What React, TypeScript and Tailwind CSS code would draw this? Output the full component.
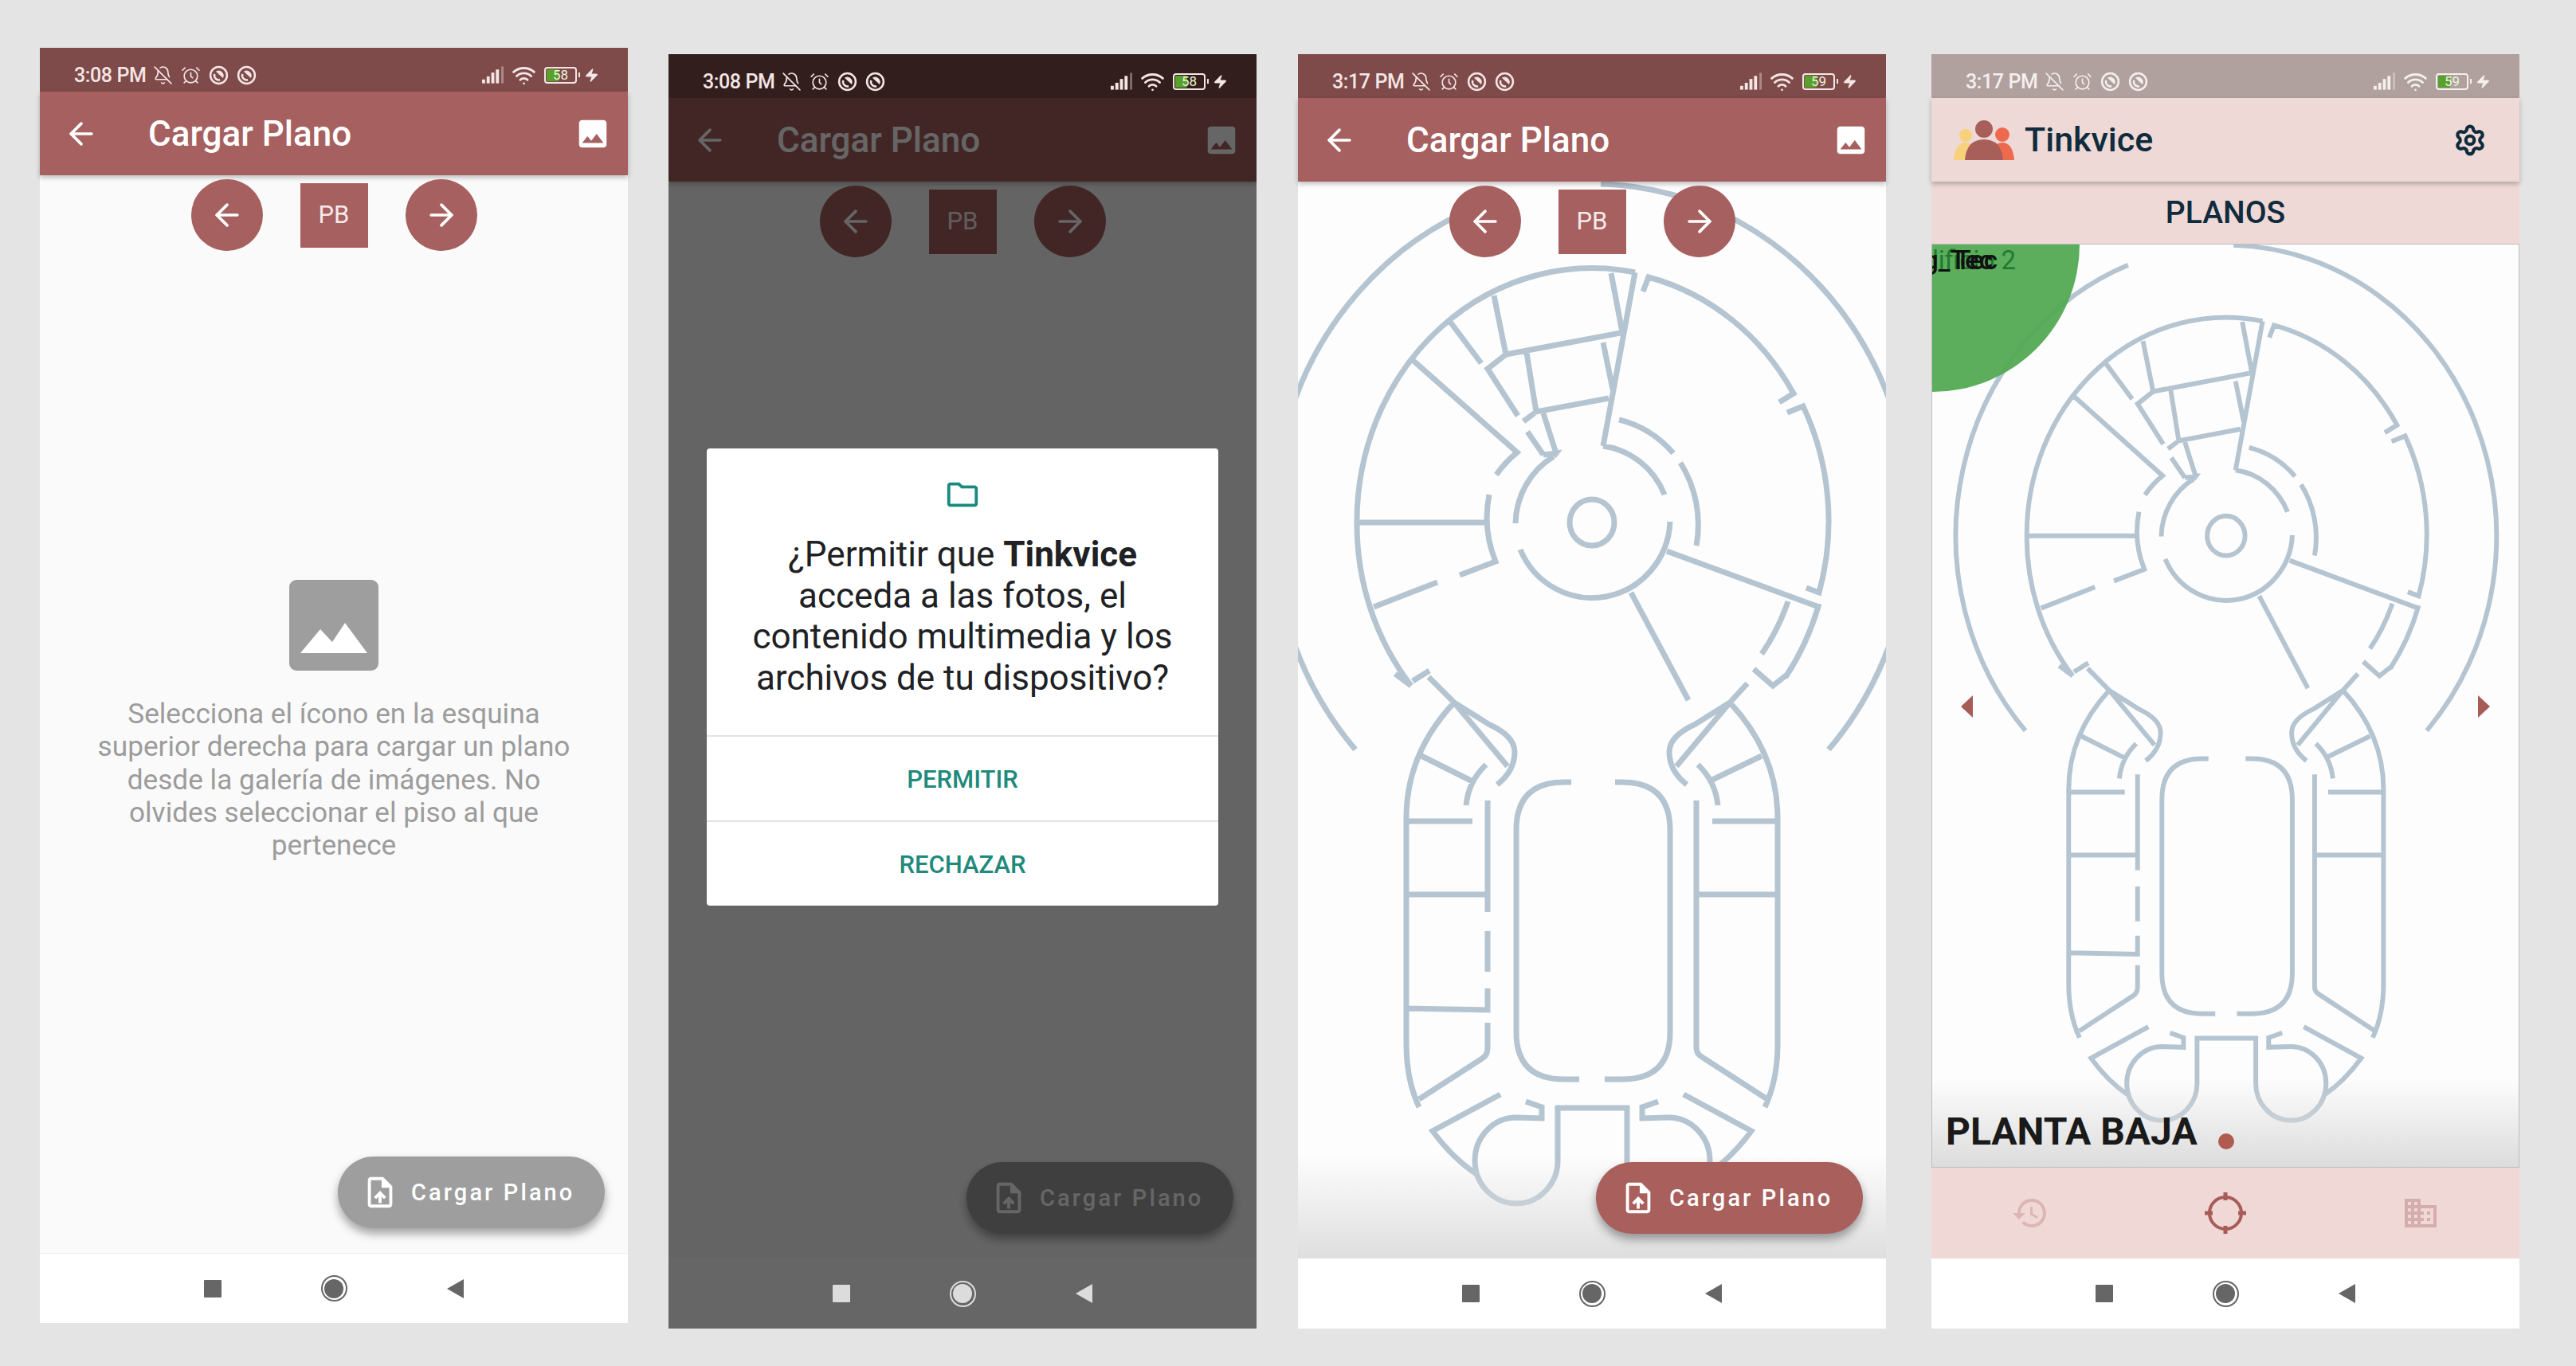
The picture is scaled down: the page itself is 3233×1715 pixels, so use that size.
import { AlarmClock, ArrowLeft, ArrowRight, BellOff, Settings, Wifi, Zap } from "lucide-react";
import { MdDomain, MdHistory, MdImage, MdOutlineFolder, MdUploadFile } from "react-icons/md";

const font = "font-['Roboto',sans-serif]";

// floor plan, coordinates are px from the centre ring of the third screen
const planPath = [
  // outer ring
  "M-145 -396A400 425 0 0 0 -297 285",
  "M11 -425A400 425 0 0 1 297 285",
  // main ring
  "M54 -314A295 318 0 0 0 -295 0A295 318 0 0 0 -227 205",
  "M64 -290L71 -308A295 318 0 0 1 253 -162L235 -151",
  "M245 -138L265 -146A295 318 0 0 1 285 88L269 82",
  "M285 102A295 318 0 0 1 243 194",
  // hooks at the bottom of the ring
  "M-204 186L-225 199M-227 205L-247 190",
  "M203 184L227 205L246 190",
  // second ring
  "M34 -129A133 140 0 0 1 102 -87",
  "M111 -75A133 140 0 0 1 131 29",
  "M-129 -35A133 140 0 0 0 -121 49L-166 66",
  "M-120 -60A133 140 0 0 1 -94 -88L-224 -203",
  "M-274 106L-194 75",
  "M-293 0L-135 0",
  // inner ring and centre
  "M14 -96A97 100 0 0 1 91 -35",
  "M98 -1A98 100 0 0 1 -90 34",
  "M-96 1A97 100 0 0 1 -48 -83",
  "M28 0A28 29 0 1 1 -28 0A28 29 0 1 1 28 0",
  "M54 -314L14 -96",
  "M-48 -83L-45 -87L-61 -85",
  // radial lines
  "M94 36L282 105",
  "M49 88L121 223",
  "M246 99A240 260 0 0 1 213 165",
  // rooms at the top
  "M24 -313L38 -239",
  "M-108 -211L36 -238",
  "M-123 -285L-108 -211L-131 -193L-93 -134",
  "M-178 -252L-139 -200",
  "M-82 -213L-70 -139L21 -156",
  "M14 -226L26 -167",
  "M-70 -139L-86 -127",
  "M-61 -137L-45 -87",
  "M-81 -114L-61 -85",
  // left wing
  "M-205 194L-173 226L-130 253Q-97 268 -97 288Q-97 312 -119 329",
  "M-173 226L-106 306",
  "M-173 226Q-233 290 -233 371L-233 655Q-233 700 -217 734",
  "M-214 293L-150 325",
  "M-133 304Q-155 325 -158 355",
  "M-233 375L-150 375",
  "M-233 467L-133 467",
  "M-131 349L-131 489",
  "M-131 513L-131 564",
  "M-131 585L-131 612L-233 610",
  "M-131 628L-131 660Q-131 669 -138 673L-217 724",
  // right wing
  "M195 202L173 226L130 253Q97 268 97 288Q97 312 119 329",
  "M173 226L106 306",
  "M173 226Q233 290 233 371L233 655Q233 700 217 734",
  "M213 293L151 323",
  "M133 304Q155 325 158 355",
  "M151 375L233 375",
  "M134 467L233 467",
  "M131 349L131 660Q131 667 138 671L220 724",
  // middle room
  "M-26 326L-35 326Q-95 326 -95 386L-95 640Q-95 699 -35 699L-16 699",
  "M29 326L38 326Q98 326 98 386L98 640Q98 699 38 699L16 699",
  // bottom
  "M-115 718L-200 764Q-175 798 -145 818",
  "M115 718L200 764Q175 798 145 818",
  "M-83 727L-63 734L-63 748L-95 747A52 54 0 1 0 -43 799L-43 735L44 735L44 799A52 54 0 1 0 95 747L63 748L63 734L83 727",
].join("");

function FloorPlan({ viewBox }: { viewBox: string }) {
  return (
    <svg viewBox={viewBox} preserveAspectRatio="none" className="absolute inset-0 h-full w-full" fill="none">
      <path d={planPath} stroke="#b4c4d0" strokeWidth={7} />
    </svg>
  );
}

function RingMark() {
  return (
    <svg viewBox="0 0 24 24" className="h-[25px] w-[25px]" fill="none" stroke="currentColor" strokeWidth={2.4}>
      <circle cx="12" cy="12" r="10" />
      <path d="M9.5 7.5A5.5 5.5 0 0 1 17 14.5Z" fill="currentColor" strokeWidth={1} />
      <path d="M7 10.5a5.5 5.5 0 0 0 6.5 7" />
    </svg>
  );
}

function SignalBars() {
  return (
    <svg viewBox="0 0 28 24" className="h-[24px] w-[27px]" fill="currentColor">
      <rect x="0" y="18" width="4" height="5" />
      <rect x="6" y="14" width="4" height="9" />
      <rect x="12" y="9" width="4" height="14" />
      <rect x="18" y="5" width="4" height="18" />
      <rect x="25" y="1" width="3" height="22" opacity=".4" />
    </svg>
  );
}

function Battery({ level }: { level: string }) {
  return (
    <div className="flex items-center">
      <div className="relative flex h-[21px] w-[41px] items-center overflow-hidden rounded-[4px] border-2 border-current p-[1px]">
        <div className="h-full w-[42%] rounded-[1px] bg-[#5aa02c]" />
        <span className="absolute inset-0 text-center text-[17px] leading-[17px] text-[#e9f7d8]">{level}</span>
      </div>
      <div className="ml-[2px] h-[6px] w-[2px] bg-current" />
    </div>
  );
}

function StatusBar({ time, battery, className }: { time: string; battery: string; className: string }) {
  return (
    <div className={`flex h-[55px] shrink-0 items-center pl-[43px] pr-[36px] pt-[13px] ${className}`}>
      <span className="mr-[9px] text-[25px] font-medium leading-none tracking-[-0.4px]">{time}</span>
      <div className="flex items-center gap-[10px]">
        <BellOff size={25} strokeWidth={1.6} />
        <AlarmClock size={25} strokeWidth={1.6} />
        <RingMark />
        <RingMark />
      </div>
      <div className="ml-auto flex items-center">
        <SignalBars />
        <Wifi size={31} strokeWidth={2.2} className="ml-[10px]" />
        <div className="ml-[10px]">
          <Battery level={battery} />
        </div>
        <Zap size={19} fill="currentColor" strokeWidth={1} className="ml-[5px]" />
      </div>
    </div>
  );
}

function AppBar() {
  return (
    <div className="relative z-10 flex h-[105px] shrink-0 items-center bg-[#a66060] pl-[30px] pr-[21px] text-white shadow-[0_3px_6px_rgba(0,0,0,0.25)]">
      <ArrowLeft size={44} strokeWidth={2} />
      <span className="ml-[62px] text-[44px] font-medium leading-none">Cargar Plano</span>
      <MdImage size={46} className="ml-auto" />
    </div>
  );
}

function FloorPicker() {
  return (
    <div className="relative z-10 flex items-center justify-center gap-[47px] pt-[5px]">
      <div className="flex h-[90px] w-[90px] items-center justify-center rounded-full bg-[#a66060] text-white">
        <ArrowLeft size={44} strokeWidth={2} />
      </div>
      <div className="flex h-[81px] w-[85px] items-center justify-center bg-[#a66060] text-[31px] text-[#f5e9e9]">PB</div>
      <div className="flex h-[90px] w-[90px] items-center justify-center rounded-full bg-[#a66060] text-white">
        <ArrowRight size={44} strokeWidth={2} />
      </div>
    </div>
  );
}

function Fab({ className }: { className: string }) {
  return (
    <div
      className={`absolute bottom-[31px] right-[29px] z-10 flex h-[90px] w-[335px] items-center rounded-full pl-[30px] text-white shadow-[0_7px_12px_rgba(0,0,0,0.35)] ${className}`}
    >
      <MdUploadFile size={46} />
      <span className="ml-[16px] text-[29px] font-medium leading-none tracking-[3.1px]">Cargar Plano</span>
    </div>
  );
}

function NavBar({ className, iconClass, icon }: { className: string; iconClass: string; icon: string }) {
  return (
    <div className={`flex h-[88px] shrink-0 items-center justify-center gap-[125px] ${className}`}>
      <div className={`h-[22px] w-[22px] rounded-[1px] ${iconClass}`} />
      <div className="flex h-[33px] w-[33px] items-center justify-center rounded-full border-2" style={{ borderColor: icon }}>
        <div className={`h-[24px] w-[24px] rounded-full ${iconClass}`} />
      </div>
      <svg viewBox="0 0 22 24" className="h-[24px] w-[22px]" fill={icon}>
        <path d="M21 0V24L0 12Z" />
      </svg>
    </div>
  );
}

function EmptyBody() {
  return (
    <div className="relative flex min-h-0 flex-1 flex-col bg-[#fafafa]">
      <FloorPicker />
      <div className="mt-[413px] flex flex-col items-center">
        <div className="flex h-[114px] w-[112px] items-center justify-center rounded-[9px] bg-[#9e9e9e]">
          <svg viewBox="0 0 112 114" className="h-full w-full" fill="#ffffff">
            <path d="M14 92L39 62L54 78L70 54L98 92Z" />
          </svg>
        </div>
        <p className="mt-[34px] text-center text-[35.2px] leading-[41.3px] text-[#9c9c9c]">
          Selecciona el ícono en la esquina
          <br />
          superior derecha para cargar un plano
          <br />
          desde la galería de imágenes. No
          <br />
          olvides seleccionar el piso al que
          <br />
          pertenece
        </p>
      </div>
      <Fab className="bg-[#9e9e9e]" />
    </div>
  );
}

function PermissionDialog() {
  return (
    <div className="absolute inset-0 z-20 flex items-center justify-center bg-black/60 pb-[36px]">
      <div className="flex h-[574px] w-[642px] flex-col rounded-[4px] bg-white">
        <div className="flex h-[360px] shrink-0 flex-col items-center pt-[35px]">
          <MdOutlineFolder size={46} className="text-[#1a8a7e]" />
          <p className="mt-[27px] text-center text-[44px] leading-[51.5px] text-[#202124]">
            ¿Permitir que <b className="font-bold">Tinkvice</b>
            <br />
            acceda a las fotos, el
            <br />
            contenido multimedia y los
            <br />
            archivos de tu dispositivo?
          </p>
        </div>
        <div className="flex h-[107px] items-center justify-center border-t-2 border-[#e3e3e3] pt-[4px] text-[31px] font-medium text-[#1f8a7c]">PERMITIR</div>
        <div className="flex flex-1 items-center justify-center border-t-2 border-[#e3e3e3] pt-[4px] text-[31px] font-medium text-[#1f8a7c]">RECHAZAR</div>
      </div>
    </div>
  );
}

function LogoPeople() {
  return (
    <svg viewBox="0 0 76 50" className="h-[50px] w-[76px]">
      <circle cx="15" cy="19" r="8" fill="#f8d27a" />
      <path d="M0 50Q2 28 15 28Q22 28 24 34L14 50Z" fill="#f8d27a" />
      <circle cx="61" cy="18" r="9" fill="#ee6a4f" />
      <path d="M76 50Q74 28 61 28Q54 28 50 34L62 50Z" fill="#ee6a4f" />
      <circle cx="38" cy="11" r="11" fill="#a85f5a" />
      <path d="M14 50Q16 24 38 24Q60 24 62 50Z" fill="#a85f5a" />
    </svg>
  );
}

function TabBar() {
  return (
    <div className="relative flex h-[114px] shrink-0 items-center justify-between bg-[#efd8d6] pl-[100px] pr-[100px]">
      <MdHistory size={48} className="text-[#dcb6b4]" />
      <svg viewBox="0 0 52 52" className="h-[52px] w-[52px]" fill="none" stroke="#a85c58" strokeWidth={4}>
        <circle cx="26" cy="26" r="20" />
        <path d="M26 0V10M26 42V52M0 26H10M42 26H52" strokeWidth={5} />
      </svg>
      <MdDomain size={48} className="text-[#d3aeac]" />
    </div>
  );
}

const lightNav = { className: "bg-white", iconClass: "bg-[#666666]", icon: "#666666" };

export default function App() {
  return (
    <div className={`flex h-[1715px] w-[3233px] items-start overflow-hidden bg-[#e4e4e4] pl-[50px] ${font}`}>
      {/* 1: empty state */}
      <div className="mt-[60px] flex h-[1601px] w-[738px] shrink-0 flex-col">
        <StatusBar time="3:08 PM" battery="58" className="bg-[#7f4b4a] text-[#f3e6e5]" />
        <AppBar />
        <EmptyBody />
        <NavBar className="border-t border-[#eeeeee] bg-white" iconClass="bg-[#666666]" icon="#666666" />
      </div>

      {/* 2: permission prompt, the system bars sit above the scrim */}
      <div className="relative ml-[51px] mt-[68px] flex h-[1600px] w-[738px] shrink-0 flex-col overflow-hidden">
        <StatusBar time="3:08 PM" battery="58" className="relative z-30 bg-[#331e1e] text-[#f3e6e5]" />
        <AppBar />
        <EmptyBody />
        <NavBar className="relative z-30 bg-[#666666]" iconClass="bg-[#dcdcdc]" icon="#dcdcdc" />
        <PermissionDialog />
      </div>

      {/* 3: plan loaded */}
      <div className="ml-[52px] mt-[68px] flex h-[1600px] w-[738px] shrink-0 flex-col">
        <StatusBar time="3:17 PM" battery="59" className="bg-[#7f4b4a] text-[#f3e6e5]" />
        <AppBar />
        <div className="relative min-h-0 flex-1 overflow-hidden bg-[#fdfdfd]">
          <FloorPlan viewBox="-369 -428 738 1352" />
          <FloorPicker />
          <div className="absolute inset-x-0 bottom-0 h-[130px] bg-gradient-to-t from-[#dedede] to-[#dedede]/0" />
          <Fab className="bg-[#a95f5b]" />
        </div>
        <NavBar {...lightNav} />
      </div>

      {/* 4: plan viewer */}
      <div className="ml-[57px] mt-[68px] flex h-[1600px] w-[738px] shrink-0 flex-col">
        <StatusBar time="3:17 PM" battery="59" className="bg-[#b0a09e] text-[#f5efee]" />
        <div className="relative z-10 flex h-[105px] shrink-0 items-center bg-[#eed9d6] pl-[28px] pr-[41px] shadow-[0_3px_6px_rgba(0,0,0,0.25)]">
          <LogoPeople />
          <span className="ml-[13px] text-[43px] font-medium leading-none text-[#0f2b3d]">Tinkvice</span>
          <Settings size={42} strokeWidth={2.4} className="ml-auto text-[#0f2b3d]" />
        </div>
        <div className="flex h-[78px] shrink-0 items-center justify-center bg-[#eed9d6] text-[39px] font-medium leading-none text-[#0f2b3d]">PLANOS</div>
        <div className="relative min-h-0 flex-1 overflow-hidden border border-[#bdbdbd] bg-[#fdfdfd]">
          <FloorPlan viewBox="-435 -426 868 1349" />
          <div className="absolute -left-[185px] -top-[185px] h-[370px] w-[370px] rounded-full bg-[#53aa54]/95" />
          <span className="absolute right-[631px] top-[1px] whitespace-nowrap text-[33px] leading-[37px] text-[#1f7a30]">Edificio 2</span>
          <span className="absolute right-[660px] top-[1px] whitespace-nowrap text-[33px] font-medium leading-[37px] text-[#111111]">Ing_Tec</span>
          <span className="absolute right-[654px] top-[1px] whitespace-nowrap text-[33px] font-medium leading-[37px] text-[#111111]">Tec</span>
          <div className="absolute left-[36px] top-[566px] h-0 w-0 border-y-[14px] border-r-[15px] border-y-transparent border-r-[#a85c58]" />
          <div className="absolute right-[36px] top-[566px] h-0 w-0 border-y-[14px] border-l-[15px] border-y-transparent border-l-[#a85c58]" />
          <div className="absolute inset-x-0 bottom-0 flex h-[112px] items-end bg-gradient-to-t from-[#dcdcdc] to-[#dcdcdc]/0 pb-[16px] pl-[17px]">
            <span className="text-[48px] font-bold leading-[56px] text-[#1a1a1a]">PLANTA BAJA</span>
            <div className="mb-[6px] ml-[26px] h-[20px] w-[20px] rounded-full bg-[#b05a50]" />
          </div>
        </div>
        <TabBar />
        <NavBar {...lightNav} />
      </div>
    </div>
  );
}
